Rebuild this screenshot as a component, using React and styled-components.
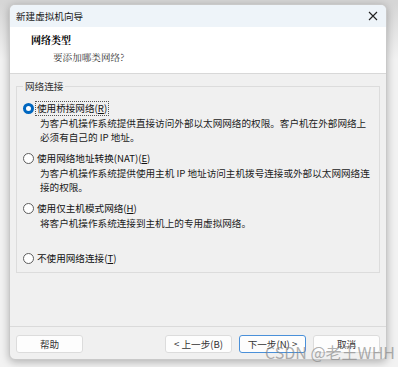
import React from 'react';
import styled, { createGlobalStyle } from 'styled-components';

const Global = createGlobalStyle`
  html, body {
    margin: 0;
    padding: 0;
    background: #ececec;
    font-family: "Noto Sans CJK SC", "Noto Sans", sans-serif;
  }
`;

const Page = styled.div`
  position: relative;
  width: 398px;
  height: 367px;
  padding: 4px 0 0 9px;
  box-sizing: border-box;
  overflow: hidden;
  background: linear-gradient(to bottom, #d6d6d6 0, #d6d6d6 4px, #f2f2f2 60px);
`;

const Window = styled.div`
  width: 378px;
  height: 356px;
  border-radius: 6px;
  border: 1px solid #c9c9c9;
  box-sizing: border-box;
  background: #f0f0f0;
  box-shadow: 0 2px 9px rgba(0, 0, 0, 0.28);
  display: flex;
  flex-direction: column;
  overflow: hidden;
`;

const TitleBar = styled.div`
  height: 22px;
  background: #eef4f9;
  display: flex;
  align-items: center;
  justify-content: space-between;
  padding: 0 8px 0 6px;
  font-size: 9.6px;
  color: #1a1a1a;
`;

const Close = styled.svg`
  width: 10px;
  height: 10px;
`;

const Header = styled.div`
  height: 47px;
  background: #ffffff;
  border-bottom: 1px solid #d8d8d8;
  box-sizing: border-box;
  padding: 5px 0 0 21px;
  font-family: "Noto Serif CJK SC", "Noto Sans CJK SC", serif;
`;

const HeadTitle = styled.div`
  font-size: 10px;
  font-weight: bold;
  line-height: 16px;
  color: #000;
`;

const HeadSub = styled.div`
  font-size: 9.6px;
  line-height: 19px;
  color: #333;
  padding-left: 22px;
`;

const Body = styled.div`
  flex: 1;
  padding: 5px 6px 0 6px;
`;

const Group = styled.fieldset`
  margin: 0;
  height: 194px;
  border: 1px solid #dcdcdc;
  border-radius: 0;
  padding: 7px 0 0 6px;
  box-sizing: border-box;
  min-width: 0;
`;

const Legend = styled.legend`
  font-size: 9.6px;
  color: #333;
  padding: 0 2px;
  margin-left: 0;
  line-height: 14px;
`;

const Option = styled.div`
  height: ${(p) => p.h}px;
`;

const RadioRow = styled.label`
  display: flex;
  align-items: center;
  height: 16px;
  font-size: 9.6px;
  color: #111;
  white-space: nowrap;
`;

const Radio = styled.span`
  width: 11px;
  height: 11px;
  border-radius: 50%;
  box-sizing: border-box;
  margin-right: 2px;
  background: #fff;
  border: ${(p) => (p.checked ? '3.5px solid #0067c0' : '1px solid #5e5e5e')};
`;

const LabelText = styled.span`
  padding: 0 1px;
  outline: ${(p) => (p.focused ? '1px dotted #555' : 'none')};
  line-height: 13px;
`;

const Key = styled.span`
  text-decoration: underline;
`;

const Desc = styled.div`
  font-size: 9.6px;
  line-height: 14px;
  color: #222;
  padding-left: 17px;
  white-space: nowrap;
`;

const Footer = styled.div`
  height: 32px;
  border-top: 1px solid #dadada;
  display: flex;
  align-items: center;
  padding: 0 6px;
  gap: 7px;
`;

const Button = styled.button`
  width: 67px;
  height: 18px;
  padding: 0;
  border: 1px solid ${(p) => (p.primary ? '#4a90d9' : '#dcdcdc')};
  border-radius: 3px;
  background: #fdfdfd;
  font-family: "Noto Sans CJK SC", sans-serif;
  font-size: 9.6px;
  color: #333;
  margin-top: 1px;
`;

const Spacer = styled.div`
  flex: 1;
`;

const Watermark = styled.div`
  position: absolute;
  left: 265px;
  top: 340px;
  font-family: "Noto Sans CJK SC", "Noto Sans", sans-serif;
  font-size: 16px;
  color: rgba(130, 130, 130, 0.65);
  white-space: nowrap;
  pointer-events: none;
`;

const options = [
  {
    label: '使用桥接网络',
    key: 'R',
    checked: true,
    h: 50,
    desc: ['为客户机操作系统提供直接访问外部以太网网络的权限。客户机在外部网络上', '必须有自己的 IP 地址。'],
  },
  {
    label: '使用网络地址转换(NAT)',
    key: 'E',
    h: 50,
    desc: ['为客户机操作系统提供使用主机 IP 地址访问主机拨号连接或外部以太网网络连', '接的权限。'],
  },
  {
    label: '使用仅主机模式网络',
    key: 'H',
    h: 50,
    desc: ['将客户机操作系统连接到主机上的专用虚拟网络。'],
  },
  { label: '不使用网络连接', key: 'T', h: 20, desc: [] },
];

export default function App() {
  return (
    <Page>
      <Global />
      <Window>
        <TitleBar>
          <span>新建虚拟机向导</span>
          <Close viewBox="0 0 10 10">
            <path d="M1 1L9 9M9 1L1 9" stroke="#222" strokeWidth="1.1" />
          </Close>
        </TitleBar>
        <Header>
          <HeadTitle>网络类型</HeadTitle>
          <HeadSub>要添加哪类网络?</HeadSub>
        </Header>
        <Body>
          <Group>
            <Legend>网络连接</Legend>
            {options.map((o, i) => (
              <Option key={o.key} h={o.h}>
                <RadioRow>
                  <Radio checked={o.checked} />
                  <LabelText focused={i === 0}>
                    {o.label}(<Key>{o.key}</Key>)
                  </LabelText>
                </RadioRow>
                {o.desc.map((d) => (
                  <Desc key={d}>{d}</Desc>
                ))}
              </Option>
            ))}
          </Group>
        </Body>
        <Footer>
          <Button>帮助</Button>
          <Spacer />
          <Button>&lt; 上一步(B)</Button>
          <Button primary>下一步(N) &gt;</Button>
          <Button>取消</Button>
        </Footer>
      </Window>
      <Watermark>CSDN @老王WHH</Watermark>
    </Page>
  );
}
